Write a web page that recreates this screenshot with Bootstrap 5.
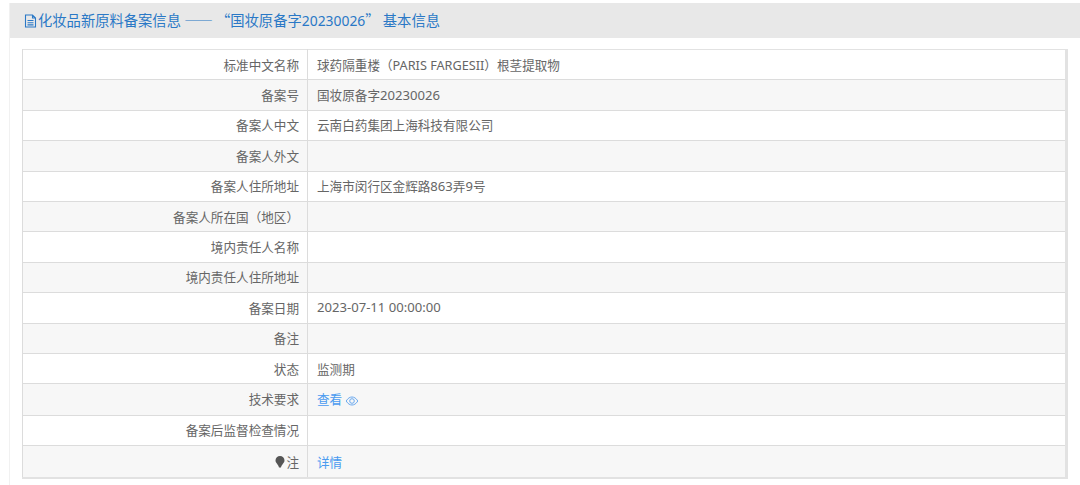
<!DOCTYPE html>
<html lang="zh-CN">
<head>
<meta charset="utf-8">
<title>化妆品新原料备案信息</title>
<link href="https://cdn.jsdelivr.net/npm/bootstrap@5.3.0/dist/css/bootstrap.min.css" rel="stylesheet">
<style>
html,body{height:485px;overflow:hidden;background:#fff;}
body{font-family:"Noto Sans","Noto Sans CJK SC",sans-serif;font-size:12.6px;color:#666;padding:3px 0 0 9px;}
.sheet{border-left:1px solid #f1f1f1;height:482px;}
.head-bar{height:35px;background:#e8e8e8;color:#2a78c6;font-family:"Noto Sans CJK SC",sans-serif;font-size:14.3px;padding-left:14px;}
.head-bar svg{margin-right:1px;}
.head-digits{font-family:"Noto Sans",sans-serif;font-size:13.9px;}
.lat-text{font-size:13.1px;}
.lat-name{font-size:12.7px;}
.body-wrap{padding:11px 11px 0 12px;}
.info-table{width:1046px;table-layout:fixed;border-collapse:collapse;border:2px solid #e2e2e2;border-width:1px 3px 2px 1px;margin:0;}
.info-table td{border:1px solid #dcdcdc;padding:1px 0 0;height:30.4px;vertical-align:middle;line-height:1.2;background:#fff;}
.info-table tr:first-child td{border-top:0;}
.info-table tr:nth-child(even) td{background:#f7f7f7;}
.info-table td:first-child{width:285px;text-align:right;padding-right:8px;}
.info-table td:last-child{padding-left:9px;border-right:0;}
.info-table tr.tall td{height:31.5px;}
.info-table tr.taller td{height:32px;padding-top:3px;}
.link-blue{color:#4a9bf0;text-decoration:none;}
.info-table td:first-child svg{vertical-align:-1px;margin-right:1px;}
</style>
</head>
<body>
<div class="sheet">
  <div class="head-bar d-flex align-items-center">
    <svg width="13" height="14" viewBox="0 0 13 14" fill="none" stroke="#2a78c6" stroke-width="1.1"><path d="M1.5 1h7l3 3v9h-10zM8.5 1v3h3M3.500 6.500h6M3.500 8.700h6M3.500 10.900h6"/></svg>
    <span>化妆品新原料备案信息 —— “国妆原备字<span class="head-digits">20230026</span>” 基本信息</span>
  </div>
  <div class="body-wrap">
    <table class="info-table">
      <tbody>
        <tr><td>标准中文名称</td><td>球药隔重楼（<span class="lat-name">PARIS FARGESII</span>）根茎提取物</td></tr>
        <tr><td>备案号</td><td>国妆原备字<span class="lat-text">20230026</span></td></tr>
        <tr><td>备案人中文</td><td>云南白药集团上海科技有限公司</td></tr>
        <tr><td>备案人外文</td><td></td></tr>
        <tr><td>备案人住所地址</td><td>上海市闵行区金辉路<span class="lat-text">863</span>弄<span class="lat-text">9</span>号</td></tr>
        <tr><td>备案人所在国（地区）</td><td></td></tr>
        <tr><td>境内责任人名称</td><td></td></tr>
        <tr><td>境内责任人住所地址</td><td></td></tr>
        <tr><td>备案日期</td><td><span class="lat-text">2023-07-11 00:00:00</span></td></tr>
        <tr><td>备注</td><td></td></tr>
        <tr><td>状态</td><td>监测期</td></tr>
        <tr class="tall"><td>技术要求</td><td><a class="link-blue" href="#">查看
          <svg width="14" height="10" viewBox="0 0 13 10" fill="none" stroke="#6aa9ef" stroke-width="1"><path d="M.7 5C2.500 2 4.500 1 6.500 1s4 1 5.800 4C10.500 8 8.500 9 6.500 9S2.500 8 .7 5z"/><circle cx="6.500" cy="5" r="2.300"/></svg></a></td></tr>
        <tr><td>备案后监督检查情况</td><td></td></tr>
        <tr class="taller"><td><svg width="10" height="12" viewBox="0 0 10 12" fill="#555"><path d="M5 0a4.500 4.500 0 0 1 4.500 4.500C9.500 7 6.500 8.500 6 11.500H4C3.500 8.500.5 7 .5 4.500A4.500 4.500 0 0 1 5 0z"/></svg>注</td><td><a class="link-blue" href="#">详情</a></td></tr>
      </tbody>
    </table>
  </div>
</div>
<script src="https://cdn.jsdelivr.net/npm/bootstrap@5.3.0/dist/js/bootstrap.bundle.min.js"></script>
</body>
</html>
